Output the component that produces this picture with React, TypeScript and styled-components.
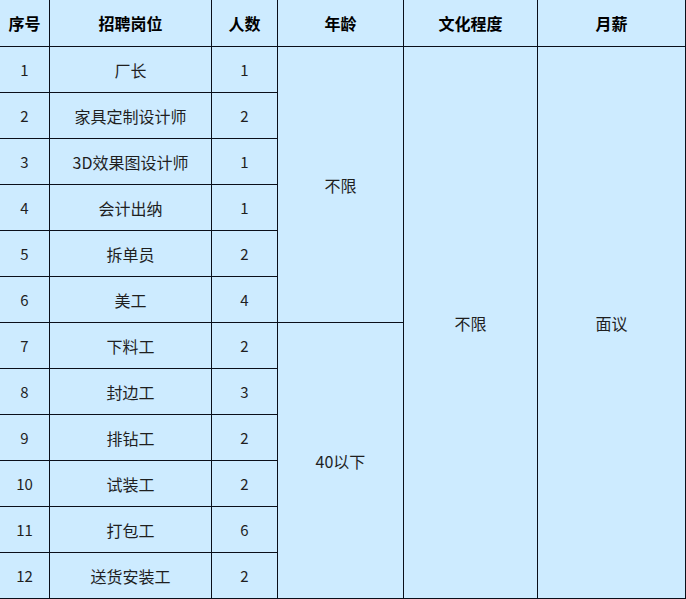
import React from "react";
import styled, { createGlobalStyle } from "styled-components";

const GlobalStyle = createGlobalStyle`
  html, body {
    margin: 0;
    padding: 0;
    background: #ffffff;
  }
  body {
    font-family: "Noto Sans CJK SC", "Noto Sans", sans-serif;
  }
`;

const Table = styled.table`
  border-collapse: separate;
  border-spacing: 0;
  table-layout: fixed;
  width: 686px;
  background: #cdebff;
  color: #1f1f1f;
`;

const HeadRow = styled.tr`
  height: 47px;
`;

const BodyRow = styled.tr`
  height: 46px;
`;

const HeadCell = styled.th`
  box-sizing: border-box;
  padding: 0;
  border-right: 1px solid #0a0f1a;
  border-bottom: 1px solid #0a0f1a;
  font-size: 16px;
  font-weight: 700;
  color: #000;
  text-align: center;
  vertical-align: middle;
`;

const Cell = styled.td<{ $numeric?: boolean }>`
  box-sizing: border-box;
  padding: 0;
  border-right: 1px solid #0a0f1a;
  border-bottom: 1px solid #0a0f1a;
  font-size: ${(p) => (p.$numeric ? "15px" : "16px")};
  text-align: center;
  vertical-align: middle;
`;

const columns = [
  { title: "序号", width: 50 },
  { title: "招聘岗位", width: 162 },
  { title: "人数", width: 66 },
  { title: "年龄", width: 126 },
  { title: "文化程度", width: 134 },
  { title: "月薪", width: 148 },
];

const jobs: [string, number][] = [
  ["厂长", 1],
  ["家具定制设计师", 2],
  ["3D效果图设计师", 1],
  ["会计出纳", 1],
  ["拆单员", 2],
  ["美工", 4],
  ["下料工", 2],
  ["封边工", 3],
  ["排钻工", 2],
  ["试装工", 2],
  ["打包工", 6],
  ["送货安装工", 2],
];

export default function App() {
  return (
    <>
      <GlobalStyle />
      <Table>
        <colgroup>
          {columns.map((c) => (
            <col key={c.title} style={{ width: c.width }} />
          ))}
        </colgroup>
        <thead>
          <HeadRow>
            {columns.map((c) => (
              <HeadCell key={c.title}>{c.title}</HeadCell>
            ))}
          </HeadRow>
        </thead>
        <tbody>
          {jobs.map(([name, count], i) => (
            <BodyRow key={name}>
              <Cell $numeric>{i + 1}</Cell>
              <Cell>{name}</Cell>
              <Cell $numeric>{count}</Cell>
              {i === 0 && <Cell rowSpan={6}>不限</Cell>}
              {i === 6 && <Cell rowSpan={6}>40以下</Cell>}
              {i === 0 && <Cell rowSpan={12}>不限</Cell>}
              {i === 0 && <Cell rowSpan={12}>面议</Cell>}
            </BodyRow>
          ))}
        </tbody>
      </Table>
    </>
  );
}
